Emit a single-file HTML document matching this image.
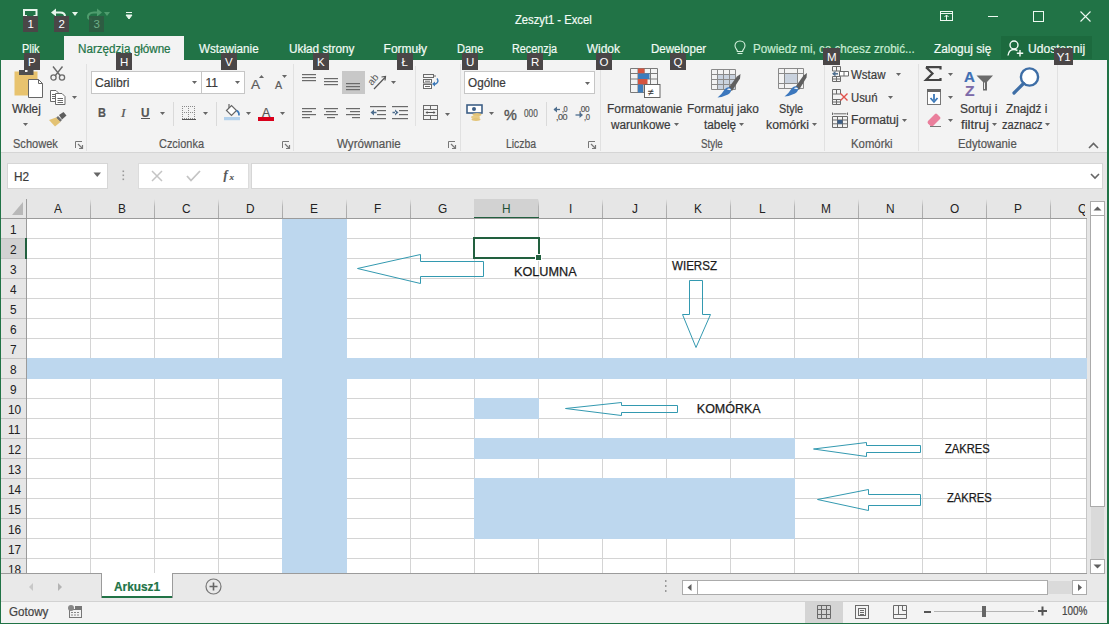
<!DOCTYPE html>
<html><head><meta charset="utf-8"><style>
html,body{margin:0;padding:0;width:1109px;height:624px;overflow:hidden;background:#fff;}
body{position:relative;font-family:'Liberation Sans',sans-serif;}
.a{position:absolute;}
.t{position:absolute;white-space:pre;transform-origin:0 0;-webkit-text-stroke:0.2px currentColor;}
svg.a{overflow:visible;}
</style></head><body>
<div class="a" style="left:0px;top:0px;width:1109px;height:624px;background:#217346;"></div>
<div class="a" style="left:1px;top:60px;width:1106px;height:92px;background:#f3f3f3;"></div>
<div class="a" style="left:1px;top:152px;width:1106px;height:1px;background:#d5d5d5;"></div>
<div class="a" style="left:64px;top:36px;width:120px;height:24px;background:#f3f3f3;"></div>
<div class="a" style="left:1px;top:153px;width:1106px;height:46px;background:#e6e6e6;"></div>
<div class="a" style="left:1px;top:199px;width:1086px;height:20px;background:#e6e6e6;"></div>
<div class="a" style="left:27px;top:219px;width:1060px;height:354px;background:#ffffff;"></div>
<div class="a" style="left:1px;top:573px;width:1106px;height:28px;background:#e9e9e9;"></div>
<div class="a" style="left:1px;top:601px;width:1106px;height:22px;background:#f3f3f3;"></div>
<div class="a" style="left:90px;top:219px;width:1px;height:354px;background:#d4d4d4;"></div>
<div class="a" style="left:154px;top:219px;width:1px;height:354px;background:#d4d4d4;"></div>
<div class="a" style="left:218px;top:219px;width:1px;height:354px;background:#d4d4d4;"></div>
<div class="a" style="left:282px;top:219px;width:1px;height:354px;background:#d4d4d4;"></div>
<div class="a" style="left:346px;top:219px;width:1px;height:354px;background:#d4d4d4;"></div>
<div class="a" style="left:410px;top:219px;width:1px;height:354px;background:#d4d4d4;"></div>
<div class="a" style="left:474px;top:219px;width:1px;height:354px;background:#d4d4d4;"></div>
<div class="a" style="left:538px;top:219px;width:1px;height:354px;background:#d4d4d4;"></div>
<div class="a" style="left:602px;top:219px;width:1px;height:354px;background:#d4d4d4;"></div>
<div class="a" style="left:666px;top:219px;width:1px;height:354px;background:#d4d4d4;"></div>
<div class="a" style="left:730px;top:219px;width:1px;height:354px;background:#d4d4d4;"></div>
<div class="a" style="left:794px;top:219px;width:1px;height:354px;background:#d4d4d4;"></div>
<div class="a" style="left:858px;top:219px;width:1px;height:354px;background:#d4d4d4;"></div>
<div class="a" style="left:922px;top:219px;width:1px;height:354px;background:#d4d4d4;"></div>
<div class="a" style="left:986px;top:219px;width:1px;height:354px;background:#d4d4d4;"></div>
<div class="a" style="left:1050px;top:219px;width:1px;height:354px;background:#d4d4d4;"></div>
<div class="a" style="left:27px;top:238px;width:1060px;height:1px;background:#d4d4d4;"></div>
<div class="a" style="left:27px;top:258px;width:1060px;height:1px;background:#d4d4d4;"></div>
<div class="a" style="left:27px;top:278px;width:1060px;height:1px;background:#d4d4d4;"></div>
<div class="a" style="left:27px;top:298px;width:1060px;height:1px;background:#d4d4d4;"></div>
<div class="a" style="left:27px;top:318px;width:1060px;height:1px;background:#d4d4d4;"></div>
<div class="a" style="left:27px;top:338px;width:1060px;height:1px;background:#d4d4d4;"></div>
<div class="a" style="left:27px;top:358px;width:1060px;height:1px;background:#d4d4d4;"></div>
<div class="a" style="left:27px;top:378px;width:1060px;height:1px;background:#d4d4d4;"></div>
<div class="a" style="left:27px;top:398px;width:1060px;height:1px;background:#d4d4d4;"></div>
<div class="a" style="left:27px;top:418px;width:1060px;height:1px;background:#d4d4d4;"></div>
<div class="a" style="left:27px;top:438px;width:1060px;height:1px;background:#d4d4d4;"></div>
<div class="a" style="left:27px;top:458px;width:1060px;height:1px;background:#d4d4d4;"></div>
<div class="a" style="left:27px;top:478px;width:1060px;height:1px;background:#d4d4d4;"></div>
<div class="a" style="left:27px;top:498px;width:1060px;height:1px;background:#d4d4d4;"></div>
<div class="a" style="left:27px;top:518px;width:1060px;height:1px;background:#d4d4d4;"></div>
<div class="a" style="left:27px;top:538px;width:1060px;height:1px;background:#d4d4d4;"></div>
<div class="a" style="left:27px;top:558px;width:1060px;height:1px;background:#d4d4d4;"></div>
<div class="a" style="left:1086px;top:219px;width:1px;height:355px;background:#c6c6c6;"></div>
<div class="a" style="left:282px;top:219px;width:65px;height:354px;background:#bdd7ee;"></div>
<div class="a" style="left:27px;top:358px;width:1060px;height:21px;background:#bdd7ee;"></div>
<div class="a" style="left:474px;top:398px;width:65px;height:21px;background:#bdd7ee;"></div>
<div class="a" style="left:474px;top:438px;width:321px;height:21px;background:#bdd7ee;"></div>
<div class="a" style="left:474px;top:478px;width:321px;height:61px;background:#bdd7ee;"></div>
<div class="a" style="left:90px;top:199px;width:1px;height:19px;background:#ababab;background:linear-gradient(#e6e6e6,#b4b4b4 40%,#a8a8a8);"></div>
<div class="a" style="left:154px;top:199px;width:1px;height:19px;background:#ababab;background:linear-gradient(#e6e6e6,#b4b4b4 40%,#a8a8a8);"></div>
<div class="a" style="left:218px;top:199px;width:1px;height:19px;background:#ababab;background:linear-gradient(#e6e6e6,#b4b4b4 40%,#a8a8a8);"></div>
<div class="a" style="left:282px;top:199px;width:1px;height:19px;background:#ababab;background:linear-gradient(#e6e6e6,#b4b4b4 40%,#a8a8a8);"></div>
<div class="a" style="left:346px;top:199px;width:1px;height:19px;background:#ababab;background:linear-gradient(#e6e6e6,#b4b4b4 40%,#a8a8a8);"></div>
<div class="a" style="left:410px;top:199px;width:1px;height:19px;background:#ababab;background:linear-gradient(#e6e6e6,#b4b4b4 40%,#a8a8a8);"></div>
<div class="a" style="left:474px;top:199px;width:1px;height:19px;background:#ababab;background:linear-gradient(#e6e6e6,#b4b4b4 40%,#a8a8a8);"></div>
<div class="a" style="left:538px;top:199px;width:1px;height:19px;background:#ababab;background:linear-gradient(#e6e6e6,#b4b4b4 40%,#a8a8a8);"></div>
<div class="a" style="left:602px;top:199px;width:1px;height:19px;background:#ababab;background:linear-gradient(#e6e6e6,#b4b4b4 40%,#a8a8a8);"></div>
<div class="a" style="left:666px;top:199px;width:1px;height:19px;background:#ababab;background:linear-gradient(#e6e6e6,#b4b4b4 40%,#a8a8a8);"></div>
<div class="a" style="left:730px;top:199px;width:1px;height:19px;background:#ababab;background:linear-gradient(#e6e6e6,#b4b4b4 40%,#a8a8a8);"></div>
<div class="a" style="left:794px;top:199px;width:1px;height:19px;background:#ababab;background:linear-gradient(#e6e6e6,#b4b4b4 40%,#a8a8a8);"></div>
<div class="a" style="left:858px;top:199px;width:1px;height:19px;background:#ababab;background:linear-gradient(#e6e6e6,#b4b4b4 40%,#a8a8a8);"></div>
<div class="a" style="left:922px;top:199px;width:1px;height:19px;background:#ababab;background:linear-gradient(#e6e6e6,#b4b4b4 40%,#a8a8a8);"></div>
<div class="a" style="left:986px;top:199px;width:1px;height:19px;background:#ababab;background:linear-gradient(#e6e6e6,#b4b4b4 40%,#a8a8a8);"></div>
<div class="a" style="left:1050px;top:199px;width:1px;height:19px;background:#ababab;background:linear-gradient(#e6e6e6,#b4b4b4 40%,#a8a8a8);"></div>
<div class="a" style="left:474px;top:199px;width:64px;height:18px;background:#d2d2d2;"></div>
<div class="a" style="left:474px;top:217px;width:65px;height:2px;background:#22603f;"></div>
<div class="a" style="left:1px;top:218px;width:1086px;height:1px;background:#9b9b9b;"></div>
<div class="t" style="left:54.23px;top:203.42px;font-size:12.5px;line-height:12.5px;color:#222222;font-weight:400;font-style:normal;font-family:'Liberation Sans',sans-serif;transform:scaleX(0.9500);-webkit-text-stroke:0;">A</div>
<div class="t" style="left:118.22px;top:203.42px;font-size:12.5px;line-height:12.5px;color:#222222;font-weight:400;font-style:normal;font-family:'Liberation Sans',sans-serif;transform:scaleX(0.9500);-webkit-text-stroke:0;">B</div>
<div class="t" style="left:182.22px;top:203.42px;font-size:12.5px;line-height:12.5px;color:#222222;font-weight:400;font-style:normal;font-family:'Liberation Sans',sans-serif;transform:scaleX(0.9500);-webkit-text-stroke:0;">C</div>
<div class="t" style="left:245.75px;top:203.42px;font-size:12.5px;line-height:12.5px;color:#222222;font-weight:400;font-style:normal;font-family:'Liberation Sans',sans-serif;transform:scaleX(0.9500);-webkit-text-stroke:0;">D</div>
<div class="t" style="left:310.23px;top:203.42px;font-size:12.5px;line-height:12.5px;color:#222222;font-weight:400;font-style:normal;font-family:'Liberation Sans',sans-serif;transform:scaleX(0.9500);-webkit-text-stroke:0;">E</div>
<div class="t" style="left:374.23px;top:203.42px;font-size:12.5px;line-height:12.5px;color:#222222;font-weight:400;font-style:normal;font-family:'Liberation Sans',sans-serif;transform:scaleX(0.9500);-webkit-text-stroke:0;">F</div>
<div class="t" style="left:438.23px;top:203.42px;font-size:12.5px;line-height:12.5px;color:#222222;font-weight:400;font-style:normal;font-family:'Liberation Sans',sans-serif;transform:scaleX(0.9500);-webkit-text-stroke:0;">G</div>
<div class="t" style="left:501.75px;top:203.42px;font-size:12.5px;line-height:12.5px;color:#1f5134;font-weight:400;font-style:normal;font-family:'Liberation Sans',sans-serif;transform:scaleX(0.9500);-webkit-text-stroke:0;">H</div>
<div class="t" style="left:568.60px;top:203.42px;font-size:12.5px;line-height:12.5px;color:#222222;font-weight:400;font-style:normal;font-family:'Liberation Sans',sans-serif;transform:scaleX(0.9500);-webkit-text-stroke:0;">I</div>
<div class="t" style="left:631.65px;top:203.42px;font-size:12.5px;line-height:12.5px;color:#222222;font-weight:400;font-style:normal;font-family:'Liberation Sans',sans-serif;transform:scaleX(0.9500);-webkit-text-stroke:0;">J</div>
<div class="t" style="left:693.75px;top:203.42px;font-size:12.5px;line-height:12.5px;color:#222222;font-weight:400;font-style:normal;font-family:'Liberation Sans',sans-serif;transform:scaleX(0.9500);-webkit-text-stroke:0;">K</div>
<div class="t" style="left:758.70px;top:203.42px;font-size:12.5px;line-height:12.5px;color:#222222;font-weight:400;font-style:normal;font-family:'Liberation Sans',sans-serif;transform:scaleX(0.9500);-webkit-text-stroke:0;">L</div>
<div class="t" style="left:821.27px;top:203.42px;font-size:12.5px;line-height:12.5px;color:#222222;font-weight:400;font-style:normal;font-family:'Liberation Sans',sans-serif;transform:scaleX(0.9500);-webkit-text-stroke:0;">M</div>
<div class="t" style="left:885.75px;top:203.42px;font-size:12.5px;line-height:12.5px;color:#222222;font-weight:400;font-style:normal;font-family:'Liberation Sans',sans-serif;transform:scaleX(0.9500);-webkit-text-stroke:0;">N</div>
<div class="t" style="left:949.75px;top:203.42px;font-size:12.5px;line-height:12.5px;color:#222222;font-weight:400;font-style:normal;font-family:'Liberation Sans',sans-serif;transform:scaleX(0.9500);-webkit-text-stroke:0;">O</div>
<div class="t" style="left:1014.22px;top:203.42px;font-size:12.5px;line-height:12.5px;color:#222222;font-weight:400;font-style:normal;font-family:'Liberation Sans',sans-serif;transform:scaleX(0.9500);-webkit-text-stroke:0;">P</div>
<div class="t" style="left:1077.75px;top:203.42px;font-size:12.5px;line-height:12.5px;color:#222222;font-weight:400;font-style:normal;font-family:'Liberation Sans',sans-serif;transform:scaleX(0.9500);-webkit-text-stroke:0;">Q</div>
<svg class="a" style="left:12px;top:202px;" width="11" height="13" viewBox="0 0 11 13"><path d="M11 0 L11 13 L0 13 Z" fill="#b8b8b8"/></svg>
<div class="a" style="left:1px;top:219px;width:25px;height:354px;background:#e6e6e6;"></div>
<div class="a" style="left:26px;top:199px;width:1px;height:375px;background:#9b9b9b;"></div>
<div class="a" style="left:1px;top:238px;width:25px;height:1px;background:#c4c4c4;"></div>
<div class="a" style="left:1px;top:258px;width:25px;height:1px;background:#c4c4c4;"></div>
<div class="a" style="left:1px;top:278px;width:25px;height:1px;background:#c4c4c4;"></div>
<div class="a" style="left:1px;top:298px;width:25px;height:1px;background:#c4c4c4;"></div>
<div class="a" style="left:1px;top:318px;width:25px;height:1px;background:#c4c4c4;"></div>
<div class="a" style="left:1px;top:338px;width:25px;height:1px;background:#c4c4c4;"></div>
<div class="a" style="left:1px;top:358px;width:25px;height:1px;background:#c4c4c4;"></div>
<div class="a" style="left:1px;top:378px;width:25px;height:1px;background:#c4c4c4;"></div>
<div class="a" style="left:1px;top:398px;width:25px;height:1px;background:#c4c4c4;"></div>
<div class="a" style="left:1px;top:418px;width:25px;height:1px;background:#c4c4c4;"></div>
<div class="a" style="left:1px;top:438px;width:25px;height:1px;background:#c4c4c4;"></div>
<div class="a" style="left:1px;top:458px;width:25px;height:1px;background:#c4c4c4;"></div>
<div class="a" style="left:1px;top:478px;width:25px;height:1px;background:#c4c4c4;"></div>
<div class="a" style="left:1px;top:498px;width:25px;height:1px;background:#c4c4c4;"></div>
<div class="a" style="left:1px;top:518px;width:25px;height:1px;background:#c4c4c4;"></div>
<div class="a" style="left:1px;top:538px;width:25px;height:1px;background:#c4c4c4;"></div>
<div class="a" style="left:1px;top:558px;width:25px;height:1px;background:#c4c4c4;"></div>
<div class="a" style="left:1px;top:239px;width:24px;height:19px;background:#d2d2d2;"></div>
<div class="a" style="left:25px;top:238px;width:2px;height:21px;background:#22603f;"></div>
<div class="t" style="left:10.48px;top:224.42px;font-size:12.5px;line-height:12.5px;color:#222222;font-weight:400;font-style:normal;font-family:'Liberation Sans',sans-serif;transform:scaleX(0.9500);-webkit-text-stroke:0;">1</div>
<div class="t" style="left:10.48px;top:244.42px;font-size:12.5px;line-height:12.5px;color:#222222;font-weight:400;font-style:normal;font-family:'Liberation Sans',sans-serif;transform:scaleX(0.9500);-webkit-text-stroke:0;">2</div>
<div class="t" style="left:10.48px;top:264.42px;font-size:12.5px;line-height:12.5px;color:#222222;font-weight:400;font-style:normal;font-family:'Liberation Sans',sans-serif;transform:scaleX(0.9500);-webkit-text-stroke:0;">3</div>
<div class="t" style="left:10.48px;top:284.42px;font-size:12.5px;line-height:12.5px;color:#222222;font-weight:400;font-style:normal;font-family:'Liberation Sans',sans-serif;transform:scaleX(0.9500);-webkit-text-stroke:0;">4</div>
<div class="t" style="left:10.48px;top:304.42px;font-size:12.5px;line-height:12.5px;color:#222222;font-weight:400;font-style:normal;font-family:'Liberation Sans',sans-serif;transform:scaleX(0.9500);-webkit-text-stroke:0;">5</div>
<div class="t" style="left:10.48px;top:324.42px;font-size:12.5px;line-height:12.5px;color:#222222;font-weight:400;font-style:normal;font-family:'Liberation Sans',sans-serif;transform:scaleX(0.9500);-webkit-text-stroke:0;">6</div>
<div class="t" style="left:10.48px;top:344.42px;font-size:12.5px;line-height:12.5px;color:#222222;font-weight:400;font-style:normal;font-family:'Liberation Sans',sans-serif;transform:scaleX(0.9500);-webkit-text-stroke:0;">7</div>
<div class="t" style="left:10.48px;top:364.42px;font-size:12.5px;line-height:12.5px;color:#222222;font-weight:400;font-style:normal;font-family:'Liberation Sans',sans-serif;transform:scaleX(0.9500);-webkit-text-stroke:0;">8</div>
<div class="t" style="left:10.48px;top:384.42px;font-size:12.5px;line-height:12.5px;color:#222222;font-weight:400;font-style:normal;font-family:'Liberation Sans',sans-serif;transform:scaleX(0.9500);-webkit-text-stroke:0;">9</div>
<div class="t" style="left:7.97px;top:404.42px;font-size:12.5px;line-height:12.5px;color:#222222;font-weight:400;font-style:normal;font-family:'Liberation Sans',sans-serif;transform:scaleX(0.9500);-webkit-text-stroke:0;">10</div>
<div class="t" style="left:8.41px;top:424.42px;font-size:12.5px;line-height:12.5px;color:#222222;font-weight:400;font-style:normal;font-family:'Liberation Sans',sans-serif;transform:scaleX(0.9500);-webkit-text-stroke:0;">11</div>
<div class="t" style="left:7.97px;top:444.42px;font-size:12.5px;line-height:12.5px;color:#222222;font-weight:400;font-style:normal;font-family:'Liberation Sans',sans-serif;transform:scaleX(0.9500);-webkit-text-stroke:0;">12</div>
<div class="t" style="left:7.97px;top:464.42px;font-size:12.5px;line-height:12.5px;color:#222222;font-weight:400;font-style:normal;font-family:'Liberation Sans',sans-serif;transform:scaleX(0.9500);-webkit-text-stroke:0;">13</div>
<div class="t" style="left:7.97px;top:484.42px;font-size:12.5px;line-height:12.5px;color:#222222;font-weight:400;font-style:normal;font-family:'Liberation Sans',sans-serif;transform:scaleX(0.9500);-webkit-text-stroke:0;">14</div>
<div class="t" style="left:7.97px;top:504.42px;font-size:12.5px;line-height:12.5px;color:#222222;font-weight:400;font-style:normal;font-family:'Liberation Sans',sans-serif;transform:scaleX(0.9500);-webkit-text-stroke:0;">15</div>
<div class="t" style="left:7.97px;top:524.42px;font-size:12.5px;line-height:12.5px;color:#222222;font-weight:400;font-style:normal;font-family:'Liberation Sans',sans-serif;transform:scaleX(0.9500);-webkit-text-stroke:0;">16</div>
<div class="t" style="left:7.97px;top:544.42px;font-size:12.5px;line-height:12.5px;color:#222222;font-weight:400;font-style:normal;font-family:'Liberation Sans',sans-serif;transform:scaleX(0.9500);-webkit-text-stroke:0;">17</div>
<div class="t" style="left:7.97px;top:564.42px;font-size:12.5px;line-height:12.5px;color:#222222;font-weight:400;font-style:normal;font-family:'Liberation Sans',sans-serif;transform:scaleX(0.9500);-webkit-text-stroke:0;">18</div>
<div class="a" style="left:473px;top:237px;width:67px;height:22px;box-sizing:border-box;border:2px solid #22603f;background:transparent;"></div>
<div class="a" style="left:536px;top:255px;width:5px;height:5px;background:#22603f;outline:1px solid #fff;"></div>
<div class="a" style="left:1087px;top:199px;width:20px;height:375px;background:#e6e6e6;"></div>
<div class="t" style="left:515.00px;top:13.84px;font-size:12px;line-height:12px;color:#f2fbf5;font-weight:400;font-style:normal;font-family:'Liberation Sans',sans-serif;transform:scaleX(0.9342);">Zeszyt1 - Excel</div>
<div class="t" style="left:21.60px;top:42.84px;font-size:12px;line-height:12px;color:#f2fbf5;font-weight:400;font-style:normal;font-family:'Liberation Sans',sans-serif;transform:scaleX(0.9048);">Plik</div>
<div class="t" style="left:77.50px;top:42.84px;font-size:12px;line-height:12px;color:#217346;font-weight:400;font-style:normal;font-family:'Liberation Sans',sans-serif;transform:scaleX(0.9706);">Narzędzia główne</div>
<div class="t" style="left:199.00px;top:42.84px;font-size:12px;line-height:12px;color:#f2fbf5;font-weight:400;font-style:normal;font-family:'Liberation Sans',sans-serif;transform:scaleX(0.9728);">Wstawianie</div>
<div class="t" style="left:288.50px;top:42.84px;font-size:12px;line-height:12px;color:#f2fbf5;font-weight:400;font-style:normal;font-family:'Liberation Sans',sans-serif;transform:scaleX(0.9821);">Układ strony</div>
<div class="t" style="left:383.60px;top:42.84px;font-size:12px;line-height:12px;color:#f2fbf5;font-weight:400;font-style:normal;font-family:'Liberation Sans',sans-serif;">Formuły</div>
<div class="t" style="left:456.80px;top:42.84px;font-size:12px;line-height:12px;color:#f2fbf5;font-weight:400;font-style:normal;font-family:'Liberation Sans',sans-serif;transform:scaleX(0.9203);">Dane</div>
<div class="t" style="left:512.40px;top:42.84px;font-size:12px;line-height:12px;color:#f2fbf5;font-weight:400;font-style:normal;font-family:'Liberation Sans',sans-serif;transform:scaleX(0.9016);">Recenzja</div>
<div class="t" style="left:586.70px;top:42.84px;font-size:12px;line-height:12px;color:#f2fbf5;font-weight:400;font-style:normal;font-family:'Liberation Sans',sans-serif;">Widok</div>
<div class="t" style="left:650.50px;top:42.84px;font-size:12px;line-height:12px;color:#f2fbf5;font-weight:400;font-style:normal;font-family:'Liberation Sans',sans-serif;transform:scaleX(0.9622);">Deweloper</div>
<div class="t" style="left:752.50px;top:42.84px;font-size:12px;line-height:12px;color:#c9ecd4;font-weight:400;font-style:normal;font-family:'Liberation Sans',sans-serif;transform:scaleX(0.9700);">Powiedz mi, co chcesz zrobić...</div>
<div class="t" style="left:934.00px;top:42.84px;font-size:12px;line-height:12px;color:#f2fbf5;font-weight:400;font-style:normal;font-family:'Liberation Sans',sans-serif;transform:scaleX(0.9870);">Zaloguj się</div>
<div class="a" style="left:1001px;top:36px;width:91px;height:23px;background:#1c6a3e;"></div>
<div class="t" style="left:1027.50px;top:42.84px;font-size:12px;line-height:12px;color:#f2fbf5;font-weight:400;font-style:normal;font-family:'Liberation Sans',sans-serif;transform:scaleX(1.0083);">Udostępnij</div>
<div class="t" style="left:12.50px;top:137.84px;font-size:12px;line-height:12px;color:#555555;font-weight:400;font-style:normal;font-family:'Liberation Sans',sans-serif;transform:scaleX(0.9197);">Schowek</div>
<div class="t" style="left:159.40px;top:137.84px;font-size:12px;line-height:12px;color:#555555;font-weight:400;font-style:normal;font-family:'Liberation Sans',sans-serif;transform:scaleX(0.9118);">Czcionka</div>
<div class="t" style="left:336.50px;top:137.84px;font-size:12px;line-height:12px;color:#555555;font-weight:400;font-style:normal;font-family:'Liberation Sans',sans-serif;transform:scaleX(0.9676);">Wyrównanie</div>
<div class="t" style="left:506.00px;top:137.84px;font-size:12px;line-height:12px;color:#555555;font-weight:400;font-style:normal;font-family:'Liberation Sans',sans-serif;transform:scaleX(0.8682);">Liczba</div>
<div class="t" style="left:701.00px;top:137.84px;font-size:12px;line-height:12px;color:#555555;font-weight:400;font-style:normal;font-family:'Liberation Sans',sans-serif;transform:scaleX(0.8147);">Style</div>
<div class="t" style="left:850.70px;top:137.84px;font-size:12px;line-height:12px;color:#555555;font-weight:400;font-style:normal;font-family:'Liberation Sans',sans-serif;transform:scaleX(0.9459);">Komórki</div>
<div class="t" style="left:958.00px;top:137.84px;font-size:12px;line-height:12px;color:#555555;font-weight:400;font-style:normal;font-family:'Liberation Sans',sans-serif;transform:scaleX(0.9460);">Edytowanie</div>
<div class="t" style="left:11.50px;top:102.84px;font-size:12px;line-height:12px;color:#3a3a3a;font-weight:400;font-style:normal;font-family:'Liberation Sans',sans-serif;transform:scaleX(0.9803);">Wklej</div>
<div class="t" style="left:606.50px;top:102.84px;font-size:12px;line-height:12px;color:#3a3a3a;font-weight:400;font-style:normal;font-family:'Liberation Sans',sans-serif;transform:scaleX(0.9914);">Formatowanie</div>
<div class="t" style="left:611.38px;top:118.84px;font-size:12px;line-height:12px;color:#3a3a3a;font-weight:400;font-style:normal;font-family:'Liberation Sans',sans-serif;transform:scaleX(0.9803);">warunkowe</div>
<div class="t" style="left:687.40px;top:102.84px;font-size:12px;line-height:12px;color:#3a3a3a;font-weight:400;font-style:normal;font-family:'Liberation Sans',sans-serif;transform:scaleX(0.9874);">Formatuj jako</div>
<div class="t" style="left:704.00px;top:118.84px;font-size:12px;line-height:12px;color:#3a3a3a;font-weight:400;font-style:normal;font-family:'Liberation Sans',sans-serif;transform:scaleX(0.9842);">tabelę</div>
<div class="t" style="left:779.40px;top:102.84px;font-size:12px;line-height:12px;color:#3a3a3a;font-weight:400;font-style:normal;font-family:'Liberation Sans',sans-serif;transform:scaleX(0.9036);">Style</div>
<div class="t" style="left:765.90px;top:118.84px;font-size:12px;line-height:12px;color:#3a3a3a;font-weight:400;font-style:normal;font-family:'Liberation Sans',sans-serif;transform:scaleX(1.0232);">komórki</div>
<div class="t" style="left:960.00px;top:102.84px;font-size:12px;line-height:12px;color:#3a3a3a;font-weight:400;font-style:normal;font-family:'Liberation Sans',sans-serif;transform:scaleX(1.0032);">Sortuj i</div>
<div class="t" style="left:961.10px;top:118.84px;font-size:12px;line-height:12px;color:#3a3a3a;font-weight:400;font-style:normal;font-family:'Liberation Sans',sans-serif;transform:scaleX(1.0985);">filtruj</div>
<div class="t" style="left:1006.00px;top:102.84px;font-size:12px;line-height:12px;color:#3a3a3a;font-weight:400;font-style:normal;font-family:'Liberation Sans',sans-serif;transform:scaleX(0.9818);">Znajdź i</div>
<div class="t" style="left:1001.90px;top:118.84px;font-size:12px;line-height:12px;color:#3a3a3a;font-weight:400;font-style:normal;font-family:'Liberation Sans',sans-serif;transform:scaleX(0.9177);">zaznacz</div>
<div class="t" style="left:851.40px;top:68.84px;font-size:12px;line-height:12px;color:#3a3a3a;font-weight:400;font-style:normal;font-family:'Liberation Sans',sans-serif;transform:scaleX(0.9578);">Wstaw</div>
<div class="t" style="left:851.40px;top:91.84px;font-size:12px;line-height:12px;color:#3a3a3a;font-weight:400;font-style:normal;font-family:'Liberation Sans',sans-serif;transform:scaleX(0.9437);">Usuń</div>
<div class="t" style="left:851.40px;top:113.84px;font-size:12px;line-height:12px;color:#3a3a3a;font-weight:400;font-style:normal;font-family:'Liberation Sans',sans-serif;transform:scaleX(1.0090);">Formatuj</div>
<div class="a" style="left:91px;top:71px;width:111px;height:23px;box-sizing:border-box;border:1px solid #c6c6c6;background:#ffffff;"></div>
<div class="a" style="left:201px;top:71px;width:44px;height:23px;box-sizing:border-box;border:1px solid #c6c6c6;background:#ffffff;"></div>
<div class="a" style="left:464px;top:71px;width:131px;height:23px;box-sizing:border-box;border:1px solid #c6c6c6;background:#ffffff;"></div>
<div class="t" style="left:94.50px;top:76.84px;font-size:12px;line-height:12px;color:#3a3a3a;font-weight:400;font-style:normal;font-family:'Liberation Sans',sans-serif;transform:scaleX(1.0107);">Calibri</div>
<div class="t" style="left:205.50px;top:76.84px;font-size:12px;line-height:12px;color:#3a3a3a;font-weight:400;font-style:normal;font-family:'Liberation Sans',sans-serif;">11</div>
<div class="t" style="left:467.80px;top:76.84px;font-size:12px;line-height:12px;color:#3a3a3a;font-weight:400;font-style:normal;font-family:'Liberation Sans',sans-serif;transform:scaleX(0.9789);">Ogólne</div>
<div class="a" style="left:7px;top:163px;width:101px;height:26px;box-sizing:border-box;border:1px solid #d6d6d6;background:#ffffff;"></div>
<div class="t" style="left:13.60px;top:170.84px;font-size:12px;line-height:12px;color:#3a3a3a;font-weight:400;font-style:normal;font-family:'Liberation Sans',sans-serif;transform:scaleX(0.9830);">H2</div>
<div class="a" style="left:138px;top:163px;width:111px;height:26px;box-sizing:border-box;border:1px solid #dcdcdc;background:#ffffff;"></div>
<div class="a" style="left:251px;top:163px;width:852px;height:26px;box-sizing:border-box;border:1px solid #d6d6d6;background:#ffffff;"></div>
<div class="a" style="left:1085px;top:199px;width:2px;height:19px;background:#e6e6e6;"></div>
<svg class="a" style="left:0px;top:0px;pointer-events:none;" width="1109" height="624" viewBox="0 0 1109 624"><polygon points="357.5,268.5 420.5,254.5 420.5,261.5 483.5,261.5 483.5,276.5 420.5,276.5 420.5,283.5" fill="none" stroke="#3399b0" stroke-width="1" stroke-linejoin="miter"/></svg>
<svg class="a" style="left:0px;top:0px;pointer-events:none;" width="1109" height="624" viewBox="0 0 1109 624"><polygon points="565.5,408.5 621.5,402.5 621.5,405.5 677.5,405.5 677.5,412.5 621.5,412.5 621.5,415.5" fill="none" stroke="#3399b0" stroke-width="1" stroke-linejoin="miter"/></svg>
<svg class="a" style="left:0px;top:0px;pointer-events:none;" width="1109" height="624" viewBox="0 0 1109 624"><polygon points="813.5,449 866.5,442.5 866.5,445.5 920.5,445.5 920.5,452.5 866.5,452.5 866.5,456.5" fill="none" stroke="#3399b0" stroke-width="1" stroke-linejoin="miter"/></svg>
<svg class="a" style="left:0px;top:0px;pointer-events:none;" width="1109" height="624" viewBox="0 0 1109 624"><polygon points="817.5,499.5 868.5,489.5 868.5,494.5 920.5,494.5 920.5,505.5 868.5,505.5 868.5,510.5" fill="none" stroke="#3399b0" stroke-width="1" stroke-linejoin="miter"/></svg>
<svg class="a" style="left:0px;top:0px;" width="1109" height="624" viewBox="0 0 1109 624"><polygon points="689.5,280.5 702.5,280.5 702.5,314.5 710.5,314.5 696,347.5 682.5,314.5 689.5,314.5" fill="none" stroke="#3399b0" stroke-width="1"/></svg>
<div class="t" style="left:513.99px;top:266.42px;font-size:12.5px;line-height:12.5px;color:#1a1a1a;font-weight:400;font-style:normal;font-family:'Liberation Sans',sans-serif;transform:scaleX(1.0134);-webkit-text-stroke:0.25px #1a1a1a;">KOLUMNA</div>
<div class="t" style="left:671.70px;top:260.42px;font-size:12.5px;line-height:12.5px;color:#1a1a1a;font-weight:400;font-style:normal;font-family:'Liberation Sans',sans-serif;transform:scaleX(0.9250);-webkit-text-stroke:0.25px #1a1a1a;">WIERSZ</div>
<div class="t" style="left:696.80px;top:403.42px;font-size:12.5px;line-height:12.5px;color:#1a1a1a;font-weight:400;font-style:normal;font-family:'Liberation Sans',sans-serif;-webkit-text-stroke:0.25px #1a1a1a;">KOMÓRKA</div>
<div class="t" style="left:944.70px;top:442.84px;font-size:12px;line-height:12px;color:#1a1a1a;font-weight:400;font-style:normal;font-family:'Liberation Sans',sans-serif;transform:scaleX(0.9290);-webkit-text-stroke:0.25px #1a1a1a;">ZAKRES</div>
<div class="t" style="left:946.70px;top:491.84px;font-size:12px;line-height:12px;color:#1a1a1a;font-weight:400;font-style:normal;font-family:'Liberation Sans',sans-serif;transform:scaleX(0.9290);-webkit-text-stroke:0.25px #1a1a1a;">ZAKRES</div>
<div class="a" style="left:1px;top:573px;width:100px;height:1px;background:#9b9b9b;"></div>
<div class="a" style="left:173px;top:573px;width:914px;height:1px;background:#9b9b9b;"></div>
<div class="a" style="left:101px;top:573px;width:72px;height:25px;background:#ffffff;"></div>
<div class="a" style="left:101px;top:573px;width:1px;height:25px;background:#9b9b9b;"></div>
<div class="a" style="left:172px;top:573px;width:1px;height:25px;background:#9b9b9b;"></div>
<div class="a" style="left:102px;top:596px;width:70px;height:2px;background:#217346;"></div>
<div class="a" style="left:1px;top:601px;width:1106px;height:1px;background:#d2d2d2;"></div>
<div class="t" style="left:113.50px;top:581.42px;font-size:12.5px;line-height:12.5px;color:#217346;font-weight:700;font-style:normal;font-family:'Liberation Sans',sans-serif;transform:scaleX(0.9490);">Arkusz1</div>
<svg class="a" style="left:25px;top:580px;" width="40" height="14" viewBox="0 0 40 14"><path d="M8 3 L4 7 L8 11 Z" fill="#c8c8c8"/><path d="M33 3 L37 7 L33 11 Z" fill="#b4b4b4"/></svg>
<svg class="a" style="left:205px;top:578px;" width="18" height="18" viewBox="0 0 18 18"><circle cx="8.5" cy="8.5" r="7.5" fill="none" stroke="#777" stroke-width="1.2"/><path d="M8.5 4.5 V12.5 M4.5 8.5 H12.5" stroke="#666" stroke-width="1.6"/></svg>
<svg class="a" style="left:664px;top:579px;" width="4" height="14" viewBox="0 0 4 14"><rect x="1" y="1" width="1.5" height="2" fill="#999"/><rect x="1" y="6" width="1.5" height="2" fill="#999"/><rect x="1" y="11" width="1.5" height="2" fill="#999"/></svg>
<div class="a" style="left:682px;top:580px;width:16px;height:15px;box-sizing:border-box;border:1px solid #ababab;background:#ffffff;"></div>
<svg class="a" style="left:682px;top:580px;" width="16" height="15" viewBox="0 0 16 15"><path d="M9.5 4 L5.5 7.5 L9.5 11 Z" fill="#606060"/></svg>
<div class="a" style="left:697px;top:580px;width:351px;height:15px;box-sizing:border-box;border:1px solid #ababab;background:#ffffff;"></div>
<div class="a" style="left:1048px;top:581px;width:24px;height:13px;background:#dadada;"></div>
<div class="a" style="left:1072px;top:580px;width:15px;height:15px;box-sizing:border-box;border:1px solid #ababab;background:#ffffff;"></div>
<svg class="a" style="left:1072px;top:580px;" width="15" height="15" viewBox="0 0 15 15"><path d="M6 4 L10 7.5 L6 11 Z" fill="#606060"/></svg>
<div class="a" style="left:1090px;top:201px;width:15px;height:15px;box-sizing:border-box;border:1px solid #ababab;background:#ffffff;"></div>
<svg class="a" style="left:1090px;top:201px;" width="15" height="15" viewBox="0 0 15 15"><path d="M3.5 9.5 L7.5 5.5 L11.5 9.5 Z" fill="#606060"/></svg>
<div class="a" style="left:1090px;top:215px;width:15px;height:292px;box-sizing:border-box;border:1px solid #ababab;background:#ffffff;"></div>
<div class="a" style="left:1091px;top:507px;width:13px;height:53px;background:#dadada;"></div>
<div class="a" style="left:1090px;top:559px;width:15px;height:15px;box-sizing:border-box;border:1px solid #ababab;background:#ffffff;"></div>
<svg class="a" style="left:1090px;top:559px;" width="15" height="15" viewBox="0 0 15 15"><path d="M3.5 5.5 L7.5 9.5 L11.5 5.5 Z" fill="#606060"/></svg>
<div class="t" style="left:8.70px;top:605.84px;font-size:12px;line-height:12px;color:#444444;font-weight:400;font-style:normal;font-family:'Liberation Sans',sans-serif;transform:scaleX(0.9660);">Gotowy</div>
<svg class="a" style="left:68px;top:605px;" width="14" height="13" viewBox="0 0 14 13"><rect x="1.5" y="4.5" width="12" height="8" fill="none" stroke="#777" stroke-width="1"/><rect x="7" y="1" width="7" height="3.5" fill="#777"/><path d="M3 7.5 H12 M3 10 H12" stroke="#888" stroke-width="1" stroke-dasharray="2 1"/><circle cx="3" cy="3" r="3" fill="#888"/></svg>
<div class="a" style="left:805px;top:602px;width:38px;height:21px;background:#d4d4d4;"></div>
<svg class="a" style="left:817px;top:605px;" width="14" height="14" viewBox="0 0 14 14"><path d="M0.5 0.5 H13.5 V13.5 H0.5 Z M0.5 4.5 H13.5 M0.5 9.5 H13.5 M4.5 0.5 V13.5 M9.5 0.5 V13.5" fill="none" stroke="#6a6a6a" stroke-width="1"/></svg>
<svg class="a" style="left:855px;top:605px;" width="14" height="14" viewBox="0 0 14 14"><rect x="0.5" y="0.5" width="13" height="13" fill="none" stroke="#6a6a6a" stroke-width="1"/><rect x="3.5" y="3.5" width="7" height="7" fill="none" stroke="#6a6a6a" stroke-width="1"/><path d="M5 5.5H9 M5 7.5H9 M5 9.5H9" stroke="#6a6a6a" stroke-width="1"/></svg>
<svg class="a" style="left:893px;top:605px;" width="14" height="14" viewBox="0 0 14 14"><path d="M0.5 0.5 H13.5 V13.5 H0.5 Z M0.5 9.5 H13.5 M5.5 0.5 V9.5 M9.5 0.5 V5.5 H13.5" fill="none" stroke="#6a6a6a" stroke-width="1"/></svg>
<div class="a" style="left:924px;top:611px;width:7px;height:2px;background:#555;"></div>
<div class="a" style="left:934px;top:611px;width:100px;height:1px;background:#b4b4b4;"></div>
<div class="a" style="left:982px;top:606px;width:4px;height:11px;background:#666;"></div>
<svg class="a" style="left:1037px;top:604px;" width="12" height="14" viewBox="0 0 12 14"><path d="M1 7 H10 M5.5 2.5 V11.5" stroke="#555" stroke-width="2"/></svg>
<div class="t" style="left:1061.80px;top:604.84px;font-size:12px;line-height:12px;color:#444444;font-weight:400;font-style:normal;font-family:'Liberation Sans',sans-serif;transform:scaleX(0.8285);">100%</div>
<svg class="a" style="left:940px;top:11px;" width="13" height="10" viewBox="0 0 13 10"><rect x="0.5" y="0.5" width="12" height="9" fill="none" stroke="#eef9f1"/><path d="M0.5 2.5 H12.5 M6.5 4 V9 M4.5 6 L6.5 4 L8.5 6" fill="none" stroke="#eef9f1"/></svg>
<div class="a" style="left:988px;top:16px;width:10px;height:1px;background:#eef9f1;"></div>
<svg class="a" style="left:1033px;top:11px;" width="11" height="11" viewBox="0 0 11 11"><rect x="0.5" y="0.5" width="10" height="10" fill="none" stroke="#eef9f1"/></svg>
<svg class="a" style="left:1080px;top:11px;" width="11" height="11" viewBox="0 0 11 11"><path d="M0.5 0.5 L10.5 10.5 M10.5 0.5 L0.5 10.5" stroke="#eef9f1" stroke-width="1.1"/></svg>
<svg class="a" style="left:22px;top:8px;" width="16" height="10" viewBox="0 0 16 10"><path d="M2 9 V2 H14.5 V9 M1 8 H5 M11.5 8 H15.5" fill="none" stroke="#e8f6ec" stroke-width="2"/></svg>
<svg class="a" style="left:51px;top:8px;" width="16" height="9" viewBox="0 0 16 9"><path d="M2 4.5 H9 C12 4.5 14 6 14 8.5" fill="none" stroke="#e8f6ec" stroke-width="2"/><path d="M0 4.5 L5 0.5 V8.5 Z" fill="#e8f6ec"/></svg>
<svg class="a" style="left:72px;top:12px;" width="6" height="4" viewBox="0 0 6 4"><path d="M0 0 H6 L3 4 Z" fill="#e8f6ec"/></svg>
<svg class="a" style="left:86px;top:8px;" width="17" height="12" viewBox="0 0 17 12"><path d="M12 4.5 H8 C4 4.5 1.5 6.5 2 9.5 C2.5 11 4 11.5 6 11.5" fill="none" stroke="#4f9d6e" stroke-width="2"/><path d="M16 4.5 L11 0.5 V8.5 Z" fill="#4f9d6e"/></svg>
<svg class="a" style="left:104px;top:12px;" width="6" height="4" viewBox="0 0 6 4"><path d="M0 0 H6 L3 4 Z" fill="#4f9d6e"/></svg>
<svg class="a" style="left:126px;top:12px;" width="6" height="10" viewBox="0 0 6 10"><path d="M0 0.5 H6 M0 3 H6 L3 7 Z" fill="#e8f6ec" stroke="#e8f6ec" stroke-width="1"/></svg>
<div class="a" style="left:23px;top:16px;width:15px;height:16px;background:#4a4647;opacity:1.0;"></div>
<div class="t" style="left:27.50px;top:19.26px;font-size:11.5px;line-height:11.5px;color:#ffffff;font-weight:400;font-style:normal;font-family:'Liberation Sans',sans-serif;-webkit-text-stroke:0;">1</div>
<div class="a" style="left:54px;top:16px;width:15px;height:16px;background:#4a4647;opacity:1.0;"></div>
<div class="t" style="left:58.50px;top:19.26px;font-size:11.5px;line-height:11.5px;color:#ffffff;font-weight:400;font-style:normal;font-family:'Liberation Sans',sans-serif;-webkit-text-stroke:0;">2</div>
<div class="a" style="left:89px;top:16px;width:15px;height:16px;background:#2f5a41;opacity:0.9;"></div>
<div class="t" style="left:93.50px;top:19.26px;font-size:11.5px;line-height:11.5px;color:#6fae88;font-weight:400;font-style:normal;font-family:'Liberation Sans',sans-serif;-webkit-text-stroke:0;">3</div>
<div class="a" style="left:86px;top:64px;width:1px;height:87px;background:#e1e1e1;"></div>
<div class="a" style="left:293px;top:64px;width:1px;height:87px;background:#e1e1e1;"></div>
<div class="a" style="left:460px;top:64px;width:1px;height:87px;background:#e1e1e1;"></div>
<div class="a" style="left:600px;top:64px;width:1px;height:87px;background:#e1e1e1;"></div>
<div class="a" style="left:824px;top:64px;width:1px;height:87px;background:#e1e1e1;"></div>
<div class="a" style="left:918px;top:64px;width:1px;height:87px;background:#e1e1e1;"></div>
<div class="a" style="left:1057px;top:64px;width:1px;height:87px;background:#e1e1e1;"></div>
<div class="a" style="left:415px;top:66px;width:1px;height:60px;background:#e1e1e1;"></div>
<div class="a" style="left:173px;top:102px;width:1px;height:24px;background:#dadada;"></div>
<div class="a" style="left:216px;top:102px;width:1px;height:24px;background:#dadada;"></div>
<div class="a" style="left:546px;top:102px;width:1px;height:24px;background:#dadada;"></div>
<svg class="a" style="left:14px;top:70px;" width="29" height="28" viewBox="0 0 29 28"><rect x="0.5" y="1.5" width="23" height="24" fill="#e8c36e"/><rect x="5" y="0" width="14.5" height="5" fill="#505050"/><rect x="11" y="0" width="2.5" height="2" fill="#f3f3f3"/><path d="M14.5 9.5 H24.5 L28.5 13.5 V27.5 H14.5 Z" fill="#ffffff" stroke="#666" stroke-width="1"/><path d="M24.5 9.5 V13.5 H28.5" fill="none" stroke="#666" stroke-width="1"/></svg>
<svg class="a" style="left:23px;top:123px;" width="5" height="3" viewBox="0 0 5 3"><path d="M0 0 H5 L2.5 3 Z" fill="#666"/></svg>
<svg class="a" style="left:50px;top:66px;" width="16" height="15" viewBox="0 0 16 15"><path d="M3 0.5 L10.5 10 M12.5 0.5 L5 10" stroke="#6a6a6a" stroke-width="1.4"/><circle cx="3.5" cy="11.5" r="2.6" fill="none" stroke="#6a6a6a" stroke-width="1.3"/><circle cx="12" cy="11.5" r="2.6" fill="none" stroke="#6a6a6a" stroke-width="1.3"/></svg>
<svg class="a" style="left:50px;top:90px;" width="16" height="15" viewBox="0 0 16 15"><path d="M0.5 0.5 H6 L8 2.5 V11.5 H0.5 Z" fill="#fff" stroke="#6a6a6a"/><path d="M2 4.5H6 M2 6.5H6 M2 8.5H6" stroke="#6a6a6a"/><path d="M5.5 3.5 H12 L15 6.5 V14.5 H5.5 Z" fill="#fff" stroke="#6a6a6a"/><path d="M7.5 8.5H13 M7.5 10.5H13 M7.5 12.5H13" stroke="#6a6a6a"/></svg>
<svg class="a" style="left:72px;top:96px;" width="5" height="3" viewBox="0 0 5 3"><path d="M0 0 H5 L2.5 3 Z" fill="#666"/></svg>
<svg class="a" style="left:49px;top:112px;" width="18" height="15" viewBox="0 0 18 15"><path d="M10 3 L14.5 0 L17.5 3.5 L13 7.5 Z" fill="#5e5e5e"/><path d="M9 4 L13 8 L11 10 L7 6 Z" fill="#6e6e6e"/><path d="M0 8 L7 5.5 L11.5 10 L6 14.5 Z" fill="#e3c273"/></svg>
<svg class="a" style="left:75px;top:141px;" width="8" height="8" viewBox="0 0 8 8"><path d="M0.5 7 V0.5 H7" fill="none" stroke="#777" stroke-width="1"/><path d="M3 3 L7.5 7.5 M7.5 4 V7.5 H4" fill="none" stroke="#777" stroke-width="1.2"/></svg>
<div class="a" style="left:24px;top:53px;width:16px;height:17px;background:#4a4647;opacity:1.0;"></div>
<div class="t" style="left:28.00px;top:57.26px;font-size:11.5px;line-height:11.5px;color:#ffffff;font-weight:400;font-style:normal;font-family:'Liberation Sans',sans-serif;-webkit-text-stroke:0;">P</div>
<svg class="a" style="left:192px;top:81px;" width="5" height="3" viewBox="0 0 5 3"><path d="M0 0 H5 L2.5 3 Z" fill="#666"/></svg>
<svg class="a" style="left:235px;top:81px;" width="5" height="3" viewBox="0 0 5 3"><path d="M0 0 H5 L2.5 3 Z" fill="#666"/></svg>
<div class="t" style="left:251.30px;top:77.99px;font-size:13px;line-height:13px;color:#5a5a5a;font-weight:400;font-style:normal;font-family:'Liberation Sans',sans-serif;transform:scaleX(1.0444);">A</div>
<svg class="a" style="left:259px;top:75px;" width="5" height="3" viewBox="0 0 5 3"><path d="M0 3 H5 L2.5 0 Z" fill="#666"/></svg>
<div class="t" style="left:274.50px;top:80.11px;font-size:10.5px;line-height:10.5px;color:#5a5a5a;font-weight:400;font-style:normal;font-family:'Liberation Sans',sans-serif;transform:scaleX(1.0143);">A</div>
<svg class="a" style="left:282px;top:75px;" width="5" height="3" viewBox="0 0 5 3"><path d="M0 0 H5 L2.5 3 Z" fill="#666"/></svg>
<div class="t" style="left:97.50px;top:107.42px;font-size:12.5px;line-height:12.5px;color:#555;font-weight:700;font-style:normal;font-family:'Liberation Sans',sans-serif;transform:scaleX(0.8778);">B</div>
<div class="t" style="left:121.30px;top:107.42px;font-size:12.5px;line-height:12.5px;color:#555;font-weight:400;font-style:italic;font-family:'Liberation Serif',sans-serif;transform:scaleX(1.1000);">I</div>
<div class="t" style="left:141.00px;top:107.42px;font-size:12.5px;line-height:12.5px;color:#555;font-weight:700;font-style:normal;font-family:'Liberation Sans',sans-serif;transform:scaleX(0.9444);">U</div>
<div class="a" style="left:141px;top:118px;width:9px;height:1.2px;background:#555;"></div>
<svg class="a" style="left:160px;top:112px;" width="5" height="3" viewBox="0 0 5 3"><path d="M0 0 H5 L2.5 3 Z" fill="#666"/></svg>
<svg class="a" style="left:182px;top:106px;" width="14" height="14" viewBox="0 0 14 14"><rect x="0" y="0" width="1" height="1" fill="#8a8a8a"/><rect x="0" y="2" width="1" height="1" fill="#8a8a8a"/><rect x="0" y="4" width="1" height="1" fill="#8a8a8a"/><rect x="0" y="6" width="1" height="1" fill="#8a8a8a"/><rect x="0" y="8" width="1" height="1" fill="#8a8a8a"/><rect x="0" y="10" width="1" height="1" fill="#8a8a8a"/><rect x="0" y="12" width="1" height="1" fill="#8a8a8a"/><rect x="2" y="0" width="1" height="1" fill="#8a8a8a"/><rect x="2" y="6" width="1" height="1" fill="#8a8a8a"/><rect x="2" y="12" width="1" height="1" fill="#8a8a8a"/><rect x="4" y="0" width="1" height="1" fill="#8a8a8a"/><rect x="4" y="6" width="1" height="1" fill="#8a8a8a"/><rect x="4" y="12" width="1" height="1" fill="#8a8a8a"/><rect x="6" y="0" width="1" height="1" fill="#8a8a8a"/><rect x="6" y="2" width="1" height="1" fill="#8a8a8a"/><rect x="6" y="4" width="1" height="1" fill="#8a8a8a"/><rect x="6" y="6" width="1" height="1" fill="#8a8a8a"/><rect x="6" y="8" width="1" height="1" fill="#8a8a8a"/><rect x="6" y="10" width="1" height="1" fill="#8a8a8a"/><rect x="6" y="12" width="1" height="1" fill="#8a8a8a"/><rect x="8" y="0" width="1" height="1" fill="#8a8a8a"/><rect x="8" y="6" width="1" height="1" fill="#8a8a8a"/><rect x="8" y="12" width="1" height="1" fill="#8a8a8a"/><rect x="10" y="0" width="1" height="1" fill="#8a8a8a"/><rect x="10" y="6" width="1" height="1" fill="#8a8a8a"/><rect x="10" y="12" width="1" height="1" fill="#8a8a8a"/><rect x="12" y="0" width="1" height="1" fill="#8a8a8a"/><rect x="12" y="2" width="1" height="1" fill="#8a8a8a"/><rect x="12" y="4" width="1" height="1" fill="#8a8a8a"/><rect x="12" y="6" width="1" height="1" fill="#8a8a8a"/><rect x="12" y="8" width="1" height="1" fill="#8a8a8a"/><rect x="12" y="10" width="1" height="1" fill="#8a8a8a"/><rect x="12" y="12" width="1" height="1" fill="#8a8a8a"/><rect x="0" y="13" width="14" height="1" fill="#555"/></svg>
<svg class="a" style="left:203px;top:112px;" width="5" height="3" viewBox="0 0 5 3"><path d="M0 0 H5 L2.5 3 Z" fill="#666"/></svg>
<svg class="a" style="left:224px;top:103px;" width="17" height="18" viewBox="0 0 17 18"><path d="M5 1 L5 6" stroke="#666" stroke-width="1.2"/><path d="M2.5 7.5 L7.5 2.5 L12.5 7.5 L7.5 12.5 Z" fill="#fff" stroke="#666" stroke-width="1.2"/><path d="M12.5 7.5 Q15.5 9 15 12.5" fill="none" stroke="#3b78b8" stroke-width="1.6"/><rect x="0" y="14" width="16" height="3.2" fill="#b3d1ec"/></svg>
<svg class="a" style="left:246px;top:112px;" width="5" height="3" viewBox="0 0 5 3"><path d="M0 0 H5 L2.5 3 Z" fill="#666"/></svg>
<div class="t" style="left:261.90px;top:107.42px;font-size:12.5px;line-height:12.5px;color:#555;font-weight:400;font-style:normal;font-family:'Liberation Sans',sans-serif;transform:scaleX(0.9889);">A</div>
<div class="a" style="left:258px;top:117px;width:16px;height:3.5px;background:#d9001b;"></div>
<svg class="a" style="left:280px;top:112px;" width="5" height="3" viewBox="0 0 5 3"><path d="M0 0 H5 L2.5 3 Z" fill="#666"/></svg>
<svg class="a" style="left:282px;top:141px;" width="8" height="8" viewBox="0 0 8 8"><path d="M0.5 7 V0.5 H7" fill="none" stroke="#777" stroke-width="1"/><path d="M3 3 L7.5 7.5 M7.5 4 V7.5 H4" fill="none" stroke="#777" stroke-width="1.2"/></svg>
<svg class="a" style="left:302px;top:74px;" width="14" height="8" viewBox="0 0 14 8"><rect x="0" y="0" width="14" height="1.2" fill="#6a6a6a"/><rect x="0" y="3" width="14" height="1.2" fill="#6a6a6a"/><rect x="0" y="6" width="14" height="1.2" fill="#6a6a6a"/></svg>
<svg class="a" style="left:324px;top:78px;" width="14" height="8" viewBox="0 0 14 8"><rect x="0" y="0" width="14" height="1.2" fill="#6a6a6a"/><rect x="0" y="3" width="14" height="1.2" fill="#6a6a6a"/><rect x="0" y="6" width="14" height="1.2" fill="#6a6a6a"/></svg>
<div class="a" style="left:342px;top:71px;width:23px;height:23px;background:#c8c8c8;"></div>
<svg class="a" style="left:346px;top:83px;" width="14" height="8" viewBox="0 0 14 8"><rect x="0" y="0" width="14" height="1.2" fill="#6a6a6a"/><rect x="0" y="3" width="14" height="1.2" fill="#6a6a6a"/><rect x="0" y="6" width="14" height="1.2" fill="#6a6a6a"/></svg>
<svg class="a" style="left:369px;top:73px;" width="19" height="17" viewBox="0 0 19 17"><text x="0" y="0" font-family="Liberation Sans" font-size="10" fill="#555" transform="translate(3,13) rotate(-50)">ab</text><path d="M5 16 L16 4.5" stroke="#555" stroke-width="1.2"/><path d="M12.5 4 L16.5 3.5 L16 7.5" fill="none" stroke="#555" stroke-width="1.2"/></svg>
<svg class="a" style="left:391px;top:81px;" width="5" height="3" viewBox="0 0 5 3"><path d="M0 0 H5 L2.5 3 Z" fill="#666"/></svg>
<svg class="a" style="left:302px;top:108px;" width="14" height="11" viewBox="0 0 14 11"><rect x="0" y="0" width="14" height="1.2" fill="#6a6a6a"/><rect x="0" y="3" width="10" height="1.2" fill="#6a6a6a"/><rect x="0" y="6" width="14" height="1.2" fill="#6a6a6a"/><rect x="0" y="9" width="8" height="1.2" fill="#6a6a6a"/></svg>
<svg class="a" style="left:324px;top:108px;" width="14" height="11" viewBox="0 0 14 11"><rect x="0.0" y="0" width="14" height="1.2" fill="#6a6a6a"/><rect x="2.0" y="3" width="10" height="1.2" fill="#6a6a6a"/><rect x="0.0" y="6" width="14" height="1.2" fill="#6a6a6a"/><rect x="3.0" y="9" width="8" height="1.2" fill="#6a6a6a"/></svg>
<svg class="a" style="left:346px;top:108px;" width="14" height="11" viewBox="0 0 14 11"><rect x="0" y="0" width="14" height="1.2" fill="#6a6a6a"/><rect x="4" y="3" width="10" height="1.2" fill="#6a6a6a"/><rect x="0" y="6" width="14" height="1.2" fill="#6a6a6a"/><rect x="6" y="9" width="8" height="1.2" fill="#6a6a6a"/></svg>
<svg class="a" style="left:370px;top:106px;" width="17" height="14" viewBox="0 0 17 14"><rect x="0" y="0" width="16" height="1.2" fill="#6a6a6a"/><rect x="7" y="4" width="9" height="1.2" fill="#6a6a6a"/><rect x="7" y="8" width="9" height="1.2" fill="#6a6a6a"/><rect x="0" y="12" width="16" height="1.2" fill="#6a6a6a"/><path d="M0.5 6.5 L4 3.5 V9.5 Z M3 5.8 H6.5 V7.2 H3 Z" fill="#4e6e8e"/></svg>
<svg class="a" style="left:392px;top:106px;" width="17" height="14" viewBox="0 0 17 14"><rect x="0" y="0" width="16" height="1.2" fill="#6a6a6a"/><rect x="7" y="4" width="9" height="1.2" fill="#6a6a6a"/><rect x="7" y="8" width="9" height="1.2" fill="#6a6a6a"/><rect x="0" y="12" width="16" height="1.2" fill="#6a6a6a"/><path d="M6.5 6.5 L3 3.5 V9.5 Z M0.5 5.8 H4 V7.2 H0.5 Z" fill="#4e6e8e"/></svg>
<svg class="a" style="left:423px;top:74px;" width="17" height="15" viewBox="0 0 17 15"><rect x="0.5" y="0.5" width="10" height="3" fill="none" stroke="#6a6a6a"/><path d="M10.5 2 H13" stroke="#6a6a6a"/><rect x="0.5" y="5.5" width="8" height="3.5" fill="#fff" stroke="#6a6a6a"/><rect x="0.5" y="10.5" width="8" height="4" fill="#fff" stroke="#6a6a6a"/><path d="M2 7.2H7 M2 12.5H7" stroke="#6a6a6a"/><path d="M14 4.5 Q16.5 8 12.5 10 L10 10" fill="none" stroke="#3b78b8" stroke-width="1.4"/><path d="M9 10 L12 7.5 V12.5 Z" fill="#3b78b8"/></svg>
<svg class="a" style="left:423px;top:105px;" width="16" height="16" viewBox="0 0 16 16"><rect x="0.5" y="0.5" width="14" height="14" fill="none" stroke="#6a6a6a"/><path d="M0.5 4.5 H14.5 M0.5 10.5 H14.5 M7.5 0.5 V4.5 M7.5 10.5 V14.5" stroke="#6a6a6a"/><path d="M3 7.5 H12" stroke="#555"/><path d="M2.5 7.5 L4.5 6 V9 Z M12.5 7.5 L10.5 6 V9 Z" fill="#555"/></svg>
<svg class="a" style="left:445px;top:113px;" width="5" height="3" viewBox="0 0 5 3"><path d="M0 0 H5 L2.5 3 Z" fill="#666"/></svg>
<svg class="a" style="left:448px;top:141px;" width="8" height="8" viewBox="0 0 8 8"><path d="M0.5 7 V0.5 H7" fill="none" stroke="#777" stroke-width="1"/><path d="M3 3 L7.5 7.5 M7.5 4 V7.5 H4" fill="none" stroke="#777" stroke-width="1.2"/></svg>
<div class="a" style="left:313px;top:53px;width:16px;height:17px;background:#4a4647;opacity:1.0;"></div>
<div class="t" style="left:317.00px;top:57.26px;font-size:11.5px;line-height:11.5px;color:#ffffff;font-weight:400;font-style:normal;font-family:'Liberation Sans',sans-serif;-webkit-text-stroke:0;">K</div>
<div class="a" style="left:397px;top:53px;width:16px;height:17px;background:#4a4647;opacity:1.0;"></div>
<div class="t" style="left:401.50px;top:57.26px;font-size:11.5px;line-height:11.5px;color:#ffffff;font-weight:400;font-style:normal;font-family:'Liberation Sans',sans-serif;-webkit-text-stroke:0;">Ł</div>
<div class="a" style="left:116px;top:53px;width:16px;height:17px;background:#4a4647;opacity:1.0;"></div>
<div class="t" style="left:120.00px;top:57.26px;font-size:11.5px;line-height:11.5px;color:#ffffff;font-weight:400;font-style:normal;font-family:'Liberation Sans',sans-serif;-webkit-text-stroke:0;">H</div>
<div class="a" style="left:221px;top:53px;width:16px;height:17px;background:#4a4647;opacity:1.0;"></div>
<div class="t" style="left:225.00px;top:57.26px;font-size:11.5px;line-height:11.5px;color:#ffffff;font-weight:400;font-style:normal;font-family:'Liberation Sans',sans-serif;-webkit-text-stroke:0;">V</div>
<svg class="a" style="left:585px;top:82px;" width="5" height="3" viewBox="0 0 5 3"><path d="M0 0 H5 L2.5 3 Z" fill="#666"/></svg>
<svg class="a" style="left:466px;top:104px;" width="18" height="17" viewBox="0 0 18 17"><rect x="1" y="1" width="15" height="8" fill="#fff" stroke="#3e5f86" stroke-width="1.6"/><circle cx="8" cy="5" r="2" fill="#3e5f86"/><ellipse cx="11" cy="10.5" rx="4.5" ry="1.6" fill="#e3c478"/><ellipse cx="9.5" cy="13" rx="4.5" ry="1.6" fill="#e8cc86"/><ellipse cx="10" cy="15.3" rx="4.5" ry="1.6" fill="#e3c478"/></svg>
<svg class="a" style="left:489px;top:112px;" width="5" height="3" viewBox="0 0 5 3"><path d="M0 0 H5 L2.5 3 Z" fill="#666"/></svg>
<div class="t" style="left:503.50px;top:107.30px;font-size:15px;line-height:15px;color:#555;font-weight:400;font-style:normal;font-family:'Liberation Sans',sans-serif;transform:scaleX(0.9615);-webkit-text-stroke:0.4px #555;">%</div>
<div class="t" style="left:523.80px;top:108.53px;font-size:10px;line-height:10px;color:#555;font-weight:400;font-style:normal;font-family:'Liberation Sans',sans-serif;transform:scaleX(0.8235);">000</div>
<svg class="a" style="left:553px;top:105px;" width="17" height="16" viewBox="0 0 17 16"><path d="M1 4.5 H7" stroke="#4e6e8e" stroke-width="1.3"/><path d="M0.5 4.5 L4 1.5 V7.5 Z" fill="#4e6e8e"/></svg>
<div class="t" style="left:562.00px;top:104.80px;font-size:8.5px;line-height:8.5px;color:#555;font-weight:400;font-style:normal;font-family:'Liberation Sans',sans-serif;transform:scaleX(0.8694);letter-spacing:-0.5px;">,0</div>
<div class="t" style="left:555.50px;top:112.80px;font-size:8.5px;line-height:8.5px;color:#555;font-weight:400;font-style:normal;font-family:'Liberation Sans',sans-serif;transform:scaleX(1.0671);letter-spacing:-0.5px;">,00</div>
<svg class="a" style="left:575px;top:111px;" width="9" height="8" viewBox="0 0 9 8"><path d="M0.5 4 H6" stroke="#4e6e8e" stroke-width="1.3"/><path d="M8 4 L4.5 1 V7 Z" fill="#4e6e8e"/></svg>
<div class="t" style="left:578.50px;top:104.80px;font-size:8.5px;line-height:8.5px;color:#555;font-weight:400;font-style:normal;font-family:'Liberation Sans',sans-serif;transform:scaleX(0.9678);letter-spacing:-0.5px;">,00</div>
<div class="t" style="left:583.50px;top:112.80px;font-size:8.5px;line-height:8.5px;color:#555;font-weight:400;font-style:normal;font-family:'Liberation Sans',sans-serif;transform:scaleX(0.9101);letter-spacing:-0.5px;">,0</div>
<svg class="a" style="left:588px;top:141px;" width="8" height="8" viewBox="0 0 8 8"><path d="M0.5 7 V0.5 H7" fill="none" stroke="#777" stroke-width="1"/><path d="M3 3 L7.5 7.5 M7.5 4 V7.5 H4" fill="none" stroke="#777" stroke-width="1.2"/></svg>
<div class="a" style="left:462px;top:53px;width:16px;height:17px;background:#4a4647;opacity:1.0;"></div>
<div class="t" style="left:466.00px;top:57.26px;font-size:11.5px;line-height:11.5px;color:#ffffff;font-weight:400;font-style:normal;font-family:'Liberation Sans',sans-serif;-webkit-text-stroke:0;">U</div>
<div class="a" style="left:527px;top:53px;width:16px;height:17px;background:#4a4647;opacity:1.0;"></div>
<div class="t" style="left:531.00px;top:57.26px;font-size:11.5px;line-height:11.5px;color:#ffffff;font-weight:400;font-style:normal;font-family:'Liberation Sans',sans-serif;-webkit-text-stroke:0;">R</div>
<div class="a" style="left:596px;top:53px;width:16px;height:17px;background:#4a4647;opacity:1.0;"></div>
<div class="t" style="left:599.50px;top:57.26px;font-size:11.5px;line-height:11.5px;color:#ffffff;font-weight:400;font-style:normal;font-family:'Liberation Sans',sans-serif;-webkit-text-stroke:0;">O</div>
<div class="a" style="left:670px;top:53px;width:16px;height:17px;background:#4a4647;opacity:1.0;"></div>
<div class="t" style="left:673.50px;top:57.26px;font-size:11.5px;line-height:11.5px;color:#ffffff;font-weight:400;font-style:normal;font-family:'Liberation Sans',sans-serif;-webkit-text-stroke:0;">Q</div>
<div class="a" style="left:823px;top:48px;width:17px;height:17px;background:#4a4647;opacity:1.0;"></div>
<div class="t" style="left:827.00px;top:52.26px;font-size:11.5px;line-height:11.5px;color:#ffffff;font-weight:400;font-style:normal;font-family:'Liberation Sans',sans-serif;-webkit-text-stroke:0;">M</div>
<div class="a" style="left:1054px;top:48px;width:19px;height:17px;background:#4a4647;opacity:1.0;"></div>
<div class="t" style="left:1056.66px;top:52.26px;font-size:11.5px;line-height:11.5px;color:#ffffff;font-weight:400;font-style:normal;font-family:'Liberation Sans',sans-serif;-webkit-text-stroke:0;">Y1</div>
<svg class="a" style="left:630px;top:68px;" width="31" height="30" viewBox="0 0 31 30"><path d="M0.5 0.5 H27.5 V24.5 H0.5 Z M0.5 5.5 H27.5 M0.5 11 H27.5 M0.5 16.5 H27.5 M8 0.5 V24.5 M14 0.5 V24.5 M20.5 0.5 V24.5" fill="none" stroke="#7a7a7a" stroke-width="1"/><rect x="8" y="0.5" width="6.5" height="5" fill="#d5543f"/><rect x="8" y="5.5" width="11.5" height="5.5" fill="#3d7cbc"/><rect x="8" y="11" width="9.5" height="5.5" fill="#d5543f"/><rect x="8" y="16.5" width="5" height="8" fill="#3d7cbc"/><rect x="14.5" y="16.5" width="15.5" height="13" fill="#fff" stroke="#666" stroke-width="1"/><text x="17.5" y="27.5" font-family="Liberation Sans" font-size="11" fill="#333">≠</text></svg>
<svg class="a" style="left:711px;top:69px;" width="30" height="29" viewBox="0 0 30 29"><rect x="7" y="5.5" width="17" height="15" fill="#c9d2de"/><path d="M0.5 0.5 H24.5 V20.5 H0.5 Z M0.5 5.5 H24.5 M0.5 10.5 H24.5 M0.5 15.5 H24.5 M6.5 0.5 V20.5 M12.5 0.5 V20.5 M18.5 0.5 V20.5" fill="none" stroke="#8a8a8a" stroke-width="1"/><path d="M17 19.5 L26 7.5 L29.5 5 L29 9.5 L21 22 Z" fill="#5f5f5f"/><path d="M14 20 Q17 17 20 19.5 Q21 23 17 25.5 Q12 28 6.5 28.5 Q11 25 14 20 Z" fill="#3b77bd"/><path d="M16.5 20.5 Q18.5 19.5 19.5 21" fill="none" stroke="#fff" stroke-width="1.1"/></svg>
<svg class="a" style="left:778px;top:68px;" width="30" height="29" viewBox="0 0 30 29"><rect x="6.5" y="5.5" width="13" height="10" fill="#c9d2de"/><path d="M0.5 0.5 H25.5 V20.5 H0.5 Z M0.5 5.5 H25.5 M0.5 15.5 H25.5 M6.5 0.5 V20.5 M19.5 0.5 V20.5" fill="none" stroke="#8a8a8a" stroke-width="1"/><path d="M17 19.5 L25.5 7.5 L29 5 L28.5 9.5 L21 22 Z" fill="#5f5f5f"/><path d="M14 20 Q17 17 20 19.5 Q21 23 17 25.5 Q12 28 6.5 28.5 Q11 25 14 20 Z" fill="#3b77bd"/><path d="M16.5 20.5 Q18.5 19.5 19.5 21" fill="none" stroke="#fff" stroke-width="1.1"/></svg>
<svg class="a" style="left:674px;top:123px;" width="5" height="3" viewBox="0 0 5 3"><path d="M0 0 H5 L2.5 3 Z" fill="#666"/></svg>
<svg class="a" style="left:739px;top:123px;" width="5" height="3" viewBox="0 0 5 3"><path d="M0 0 H5 L2.5 3 Z" fill="#666"/></svg>
<svg class="a" style="left:812px;top:123px;" width="5" height="3" viewBox="0 0 5 3"><path d="M0 0 H5 L2.5 3 Z" fill="#666"/></svg>
<svg class="a" style="left:832px;top:66px;" width="17" height="16" viewBox="0 0 17 16"><path d="M0.5 0.5 H8.5 V5 H0.5 Z M4.5 0.5 V5 M0.5 10.5 H8.5 V15.5 H0.5 Z M0.5 13 H8.5 M4.5 10.5 V15.5" fill="none" stroke="#6a6a6a"/><path d="M7.5 5.5 H16.5 V10 H7.5 Z M12 5.5 V10" fill="#fff" stroke="#6a6a6a"/><path d="M1 7.8 H6" stroke="#4e6e8e" stroke-width="1.5"/><path d="M0 7.8 L3.5 5 V10.6 Z" fill="#4e6e8e"/></svg>
<svg class="a" style="left:832px;top:89px;" width="17" height="16" viewBox="0 0 17 16"><path d="M0.5 0.5 H8.5 V5 H0.5 Z M4.5 0.5 V5 M0.5 10.5 H8.5 V15.5 H0.5 Z M0.5 13 H8.5 M4.5 10.5 V15.5 M0.5 5 V10.5 H5" fill="none" stroke="#6a6a6a"/><path d="M8.5 4.5 L15.5 11.5 M15.5 4.5 L8.5 11.5" stroke="#e0504a" stroke-width="1.4"/></svg>
<svg class="a" style="left:832px;top:112px;" width="16" height="17" viewBox="0 0 16 17"><path d="M0.5 0.5 V3 M15.5 0.5 V3 M1.5 1.8 H14.5" stroke="#6a6a6a" stroke-width="1"/><path d="M0.5 4.5 H15.5 V15.5 H0.5 Z M0.5 8 H15.5 M0.5 11.8 H15.5 M5.5 4.5 V15.5 M10.5 4.5 V15.5" fill="none" stroke="#6a6a6a"/><rect x="5.5" y="8" width="5" height="3.8" fill="#3e5f86"/></svg>
<svg class="a" style="left:896px;top:73px;" width="5" height="3" viewBox="0 0 5 3"><path d="M0 0 H5 L2.5 3 Z" fill="#666"/></svg>
<svg class="a" style="left:888px;top:96px;" width="5" height="3" viewBox="0 0 5 3"><path d="M0 0 H5 L2.5 3 Z" fill="#666"/></svg>
<svg class="a" style="left:902px;top:119px;" width="5" height="3" viewBox="0 0 5 3"><path d="M0 0 H5 L2.5 3 Z" fill="#666"/></svg>
<svg class="a" style="left:925px;top:66px;" width="17" height="15" viewBox="0 0 17 15"><path d="M1 1.2 H15.5 V3.5 M15.5 12 V14 H1 L7.5 7.5 L1 1.2" fill="none" stroke="#444" stroke-width="2.2" stroke-linejoin="miter"/></svg>
<svg class="a" style="left:948px;top:73px;" width="5" height="3" viewBox="0 0 5 3"><path d="M0 0 H5 L2.5 3 Z" fill="#666"/></svg>
<svg class="a" style="left:927px;top:89px;" width="14" height="16" viewBox="0 0 14 16"><rect x="0.5" y="0.5" width="13" height="15" fill="#fff" stroke="#777"/><rect x="0" y="0" width="14" height="3" fill="#666"/><path d="M7 5 V11.5" stroke="#3b78b8" stroke-width="1.8"/><path d="M3.5 9 L7 13 L10.5 9" fill="none" stroke="#3b78b8" stroke-width="1.8"/></svg>
<svg class="a" style="left:948px;top:96px;" width="5" height="3" viewBox="0 0 5 3"><path d="M0 0 H5 L2.5 3 Z" fill="#666"/></svg>
<svg class="a" style="left:927px;top:112px;" width="15" height="15" viewBox="0 0 15 15"><path d="M1 9 L8 2 Q9 1 10 2 L13 5 Q14 6 13 7 L6 14 L3.5 14 L1 11.5 Q0 10 1 9 Z" fill="#ea7f9c"/><path d="M3 14.5 H14" stroke="#777" stroke-width="1"/></svg>
<svg class="a" style="left:948px;top:119px;" width="5" height="3" viewBox="0 0 5 3"><path d="M0 0 H5 L2.5 3 Z" fill="#666"/></svg>
<div class="t" style="left:964.30px;top:70.15px;font-size:14px;line-height:14px;color:#3e6fb4;font-weight:700;font-style:normal;font-family:'Liberation Sans',sans-serif;transform:scaleX(1.0800);">A</div>
<div class="t" style="left:964.50px;top:83.65px;font-size:14px;line-height:14px;color:#7c6aa9;font-weight:700;font-style:normal;font-family:'Liberation Sans',sans-serif;transform:scaleX(1.1111);">Z</div>
<svg class="a" style="left:976px;top:75px;" width="18" height="16" viewBox="0 0 18 16"><path d="M0.5 0.5 H17 L11 7 V15.5 H7 V7 Z" fill="#6a6a6a"/><path d="M8.5 7.5 V14" stroke="#eee" stroke-width="1"/></svg>
<svg class="a" style="left:1010px;top:66px;" width="31" height="31" viewBox="0 0 31 31"><circle cx="19.5" cy="11" r="8.6" fill="#fff" stroke="#3e6ea6" stroke-width="2.4"/><path d="M13.5 17.5 L4 27" stroke="#3e6ea6" stroke-width="3.2" stroke-linecap="round"/></svg>
<svg class="a" style="left:992px;top:123px;" width="5" height="3" viewBox="0 0 5 3"><path d="M0 0 H5 L2.5 3 Z" fill="#666"/></svg>
<svg class="a" style="left:1045px;top:123px;" width="5" height="3" viewBox="0 0 5 3"><path d="M0 0 H5 L2.5 3 Z" fill="#666"/></svg>
<svg class="a" style="left:1088px;top:142px;" width="11" height="7" viewBox="0 0 11 7"><path d="M1 6 L5.5 1.5 L10 6" fill="none" stroke="#666" stroke-width="1.6"/></svg>
<svg class="a" style="left:93px;top:172px;" width="9" height="6" viewBox="0 0 9 6"><path d="M0.5 0.5 H8 L4.25 5 Z" fill="#666"/></svg>
<svg class="a" style="left:122px;top:170px;" width="3" height="12" viewBox="0 0 3 12"><rect x="0.5" y="0.5" width="1.6" height="1.6" fill="#999"/><rect x="0.5" y="4.5" width="1.6" height="1.6" fill="#999"/><rect x="0.5" y="8.5" width="1.6" height="1.6" fill="#999"/></svg>
<svg class="a" style="left:151px;top:170px;" width="12" height="12" viewBox="0 0 12 12"><path d="M1 1 L11 11 M11 1 L1 11" stroke="#c4c4c4" stroke-width="1.5"/></svg>
<svg class="a" style="left:186px;top:170px;" width="15" height="12" viewBox="0 0 15 12"><path d="M1 6 L5 10.5 L14 1" fill="none" stroke="#c4c4c4" stroke-width="1.8"/></svg>
<div class="t" style="left:223.50px;top:168.84px;font-size:12px;line-height:12px;color:#555;font-weight:700;font-style:italic;font-family:'Liberation Serif',sans-serif;">f</div>
<div class="t" style="left:229.50px;top:173.38px;font-size:9px;line-height:9px;color:#555;font-weight:700;font-style:italic;font-family:'Liberation Serif',sans-serif;">x</div>
<svg class="a" style="left:1090px;top:173px;" width="10" height="6" viewBox="0 0 10 6"><path d="M1 1 L5 5 L9 1" fill="none" stroke="#666" stroke-width="1.6"/></svg>
<svg class="a" style="left:734px;top:40px;" width="12" height="15" viewBox="0 0 12 15"><path d="M6 1 C2.8 1 1 3.3 1 5.8 C1 8 2.4 9 3.3 10.5 V11.5 H8.7 V10.5 C9.6 9 11 8 11 5.8 C11 3.3 9.2 1 6 1 Z" fill="none" stroke="#d4f0dc" stroke-width="1.1"/><path d="M3.5 13.5 H8.5" stroke="#d4f0dc" stroke-width="1.1"/></svg>
<svg class="a" style="left:1007px;top:40px;" width="17" height="17" viewBox="0 0 17 17"><circle cx="7" cy="5" r="4" fill="none" stroke="#f2fbf5" stroke-width="1.4"/><path d="M1 15.5 C1.5 11.5 3.5 9.5 7 9.5 C8.5 9.5 9.5 10 10.5 10.5" fill="none" stroke="#f2fbf5" stroke-width="1.4"/><path d="M13 10 V16.5 M9.8 13.2 H16.2" stroke="#f2fbf5" stroke-width="1.4"/></svg>
</body></html>
